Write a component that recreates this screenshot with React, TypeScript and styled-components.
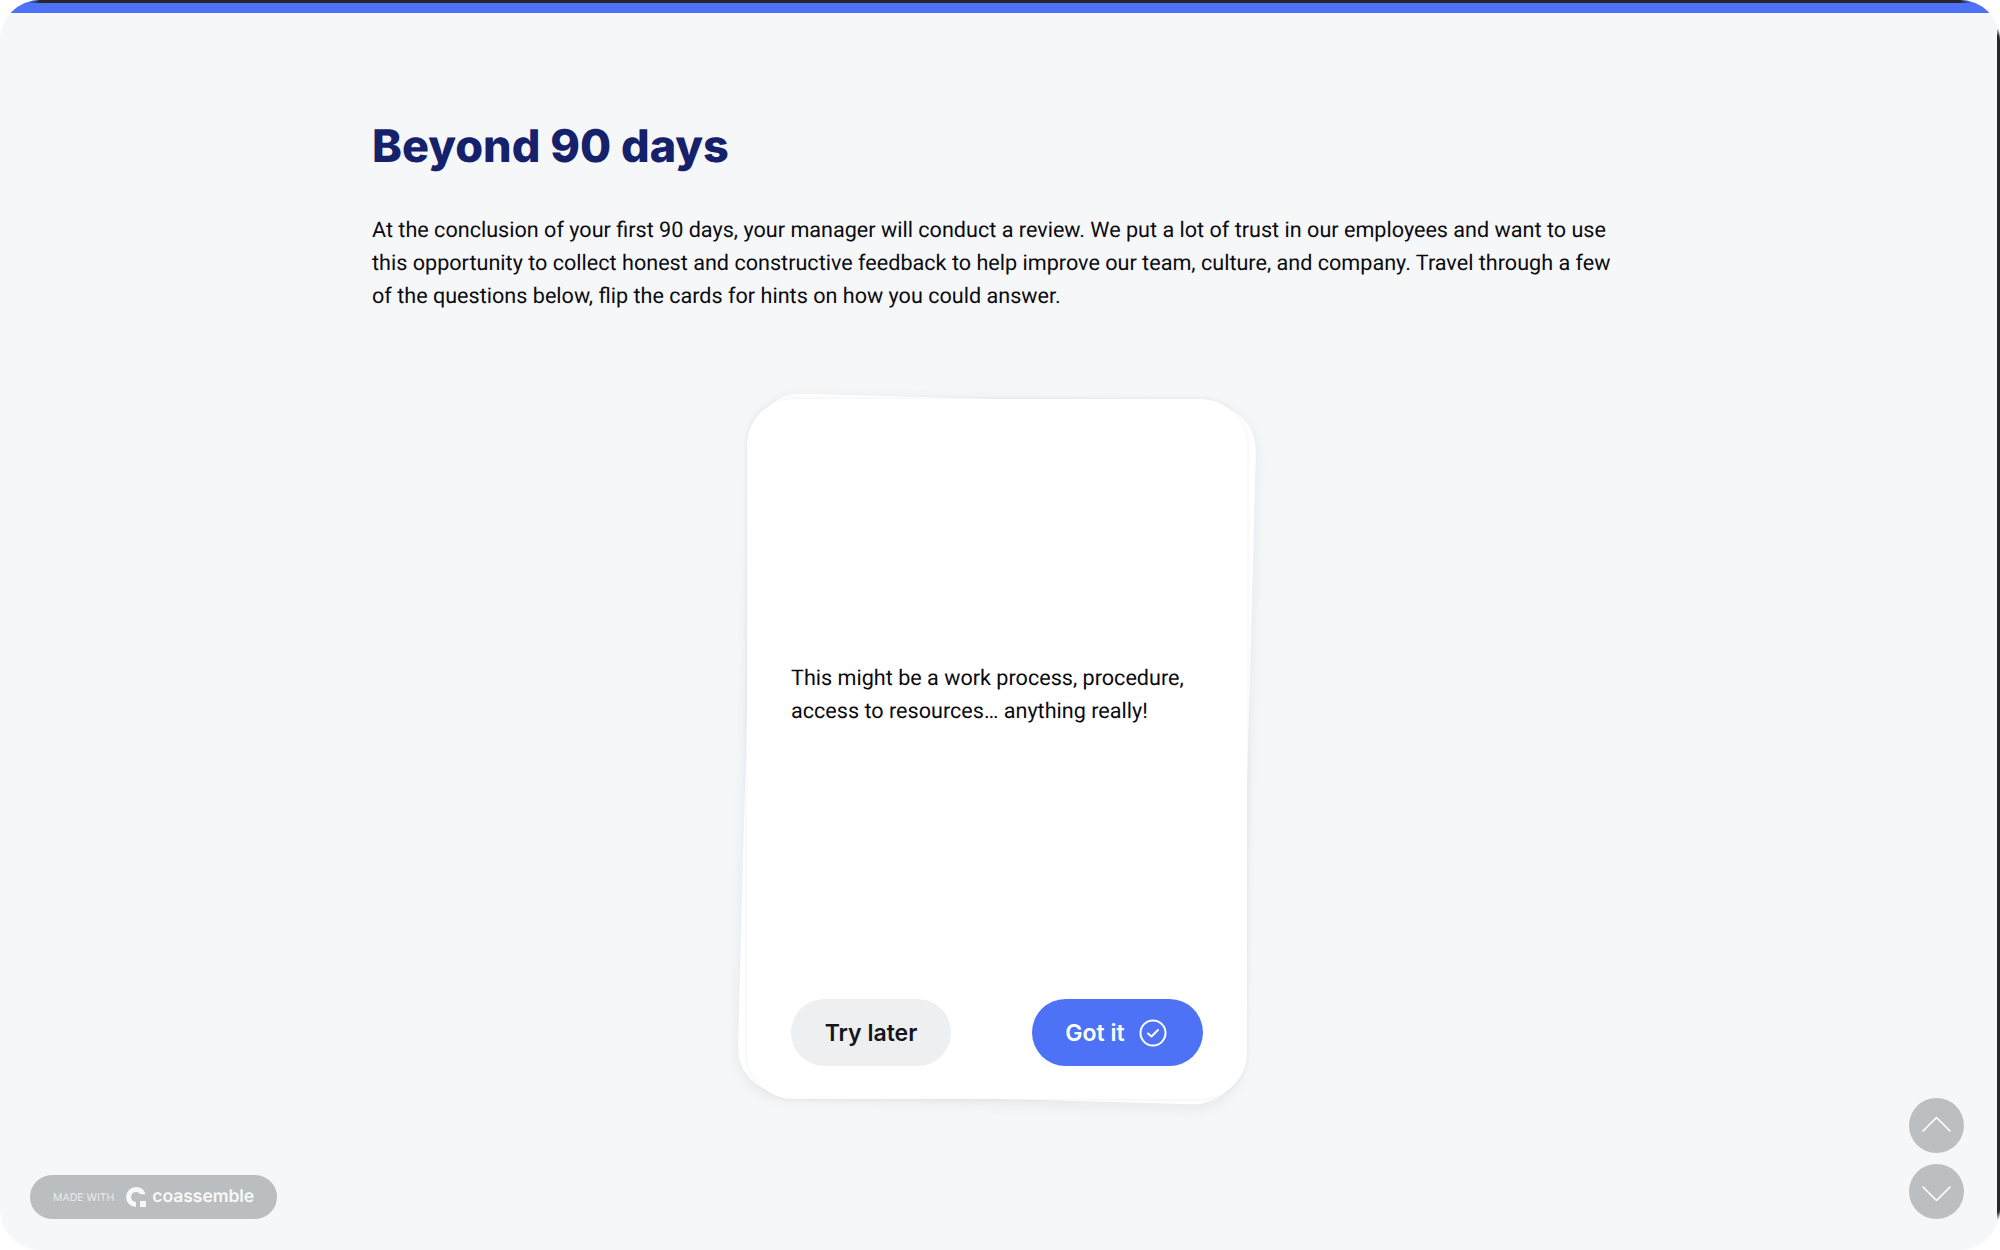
import React from 'react';
import styled, { createGlobalStyle } from 'styled-components';

const GlobalStyle = createGlobalStyle`
  html, body {
    margin: 0;
    padding: 0;
    background: #ffffff;
    text-rendering: geometricPrecision;
  }
  * {
    box-sizing: border-box;
  }
`;

const Screen = styled.main`
  position: relative;
  display: flex;
  flex-direction: column;
  width: 2000px;
  height: 1250px;
  border-radius: 40px;
  background: #f6f7f9;
  overflow: hidden;
`;

const EdgeLine = styled.div<{ $side: 'top' | 'right' }>`
  position: absolute;
  ${props => props.$side === 'top'
    ? `
    top: 0;
    left: 28px;
    right: 28px;
    height: 3px;
    background: linear-gradient(90deg, transparent, #26262b 12px, #26262b calc(100% - 12px), transparent);
  `
    : `
    top: 28px;
    right: 0;
    bottom: 30px;
    width: 3px;
    background: linear-gradient(180deg, transparent, #26262b 8px, #26262b calc(100% - 8px), transparent);
  `}
`;

const ProgressBar = styled.div`
  flex: none;
  height: 13px;
  background: #4d72f5;
`;

const Content = styled.section`
  display: flex;
  flex-direction: column;
  padding: 103px 378px 0 372px;
`;

const Title = styled.h1`
  margin: 0 0 38px;
  font-family: Inter, 'Liberation Sans', sans-serif;
  font-size: 45px;
  font-weight: 800;
  line-height: 60px;
  color: #15216b;
`;

const Intro = styled.p`
  margin: 0;
  font-family: Roboto, 'Liberation Sans', sans-serif;
  font-size: 21.6px;
  line-height: 33px;
  color: #0b0b0f;
`;

const CardStack = styled.div`
  position: relative;
  align-self: center;
  width: 500px;
  height: 700px;
  margin-top: 86px;
`;

const BackCard = styled.div`
  position: absolute;
  inset: 0 -1px;
  border-radius: 46px;
  background: #ffffff;
  box-shadow: 0 4px 16px rgba(20, 25, 45, 0.07);
  transform: rotate(1.5deg);
`;

const Card = styled.article`
  position: relative;
  display: flex;
  flex-direction: column;
  height: 100%;
  padding: 0 44px 33px;
  border-radius: 46px;
  background: #ffffff;
  box-shadow: 0 0 5px rgba(20, 25, 45, 0.07);
`;

const CardBody = styled.div`
  flex: 1;
  display: flex;
  align-items: center;
  padding-bottom: 8px;
  font-family: Roboto, 'Liberation Sans', sans-serif;
  font-size: 21.6px;
  line-height: 33px;
  color: #0b0b0f;
`;

const CardActions = styled.div`
  display: flex;
  justify-content: space-between;
`;

const PillButton = styled.button<{ $primary?: boolean }>`
  display: flex;
  align-items: center;
  justify-content: center;
  gap: 14px;
  width: ${props => (props.$primary ? '171px' : '160px')};
  height: 67px;
  padding: ${props => (props.$primary ? '0 3px 0 0' : '0')};
  border: none;
  border-radius: 34px;
  background: ${props => (props.$primary ? '#4d72f5' : '#eeeff1')};
  color: ${props => (props.$primary ? '#ffffff' : '#14161c')};
  font-family: Inter, 'Liberation Sans', sans-serif;
  font-size: 23px;
  font-weight: 600;
`;

const Badge = styled.div`
  position: absolute;
  left: 30px;
  bottom: 31px;
  display: flex;
  align-items: center;
  width: 247px;
  height: 44px;
  padding-left: 23px;
  border-radius: 22px;
  background: #bbbec1;
`;

const BadgeLabel = styled.span`
  margin-right: 12px;
  font-family: Inter, 'Liberation Sans', sans-serif;
  font-size: 10.5px;
  color: #e9eaeb;
  white-space: nowrap;
`;

const BrandName = styled.span`
  margin: 0 0 2px 6px;
  font-family: Inter, 'Liberation Sans', sans-serif;
  font-size: 17.6px;
  font-weight: 600;
  letter-spacing: -0.1px;
  color: #f7f8f8;
`;

const ScrollNav = styled.nav`
  position: absolute;
  right: 36px;
  bottom: 31px;
  display: flex;
  flex-direction: column;
  gap: 11px;
`;

const ScrollButton = styled.button<{ $up?: boolean }>`
  display: flex;
  align-items: center;
  justify-content: center;
  width: 55px;
  height: 55px;
  padding: ${props => (props.$up ? '0 0 3px' : '4px 0 0')};
  border: none;
  border-radius: 50%;
  background: #bcbfc2;
`;

const CheckCircle = () => (
  <svg width="28" height="28" viewBox="0 0 28 28" fill="none" stroke="#fff" strokeWidth="2" strokeLinecap="round" strokeLinejoin="round">
    <circle cx="14" cy="14" r="12.5" />
    <path d="M9 14.5l3.5 3L19 11" />
  </svg>
);

const Chevron = ({ up }: { up?: boolean }) => (
  <svg width="29" height="16" viewBox="0 0 29 16" fill="none" stroke="#fff" strokeWidth="1.6" strokeLinecap="round" strokeLinejoin="round">
    <path d={up ? 'M1 15L14.5 1.5L28 15' : 'M1 1L14.5 14.5L28 1'} />
  </svg>
);

const BrandMark = () => (
  <svg width="20" height="20" viewBox="0 0 20 20" fill="#f7f8f8">
    <path d="M10 0a10 10 0 0 1 9.6 7.2h-5.4A5 5 0 1 0 10 15v5A10 10 0 0 1 10 0z" />
    <rect x="14" y="14" width="6" height="6" />
  </svg>
);

export default function App() {
  return (
    <>
      <GlobalStyle />
      <Screen>
        <ProgressBar />
        <EdgeLine $side="top" />
        <EdgeLine $side="right" />
        <Content>
          <Title>Beyond 90 days</Title>
          <Intro>
            At the conclusion of your first 90 days, your manager will conduct a review. We put a lot of trust in our employees and want to use this opportunity to collect honest and constructive feedback to help improve our team, culture, and company. Travel through a few of the questions below, flip the cards for hints on how you could answer.
          </Intro>
          <CardStack>
            <BackCard />
            <Card>
              <CardBody>
                This might be a work process, procedure, access to resources… anything really!
              </CardBody>
              <CardActions>
                <PillButton>Try later</PillButton>
                <PillButton $primary>
                  Got it
                  <CheckCircle />
                </PillButton>
              </CardActions>
            </Card>
          </CardStack>
        </Content>
        <Badge>
          <BadgeLabel>MADE WITH</BadgeLabel>
          <BrandMark />
          <BrandName>coassemble</BrandName>
        </Badge>
        <ScrollNav>
          <ScrollButton $up aria-label="Previous"><Chevron up /></ScrollButton>
          <ScrollButton aria-label="Next"><Chevron /></ScrollButton>
        </ScrollNav>
      </Screen>
    </>
  );
}
